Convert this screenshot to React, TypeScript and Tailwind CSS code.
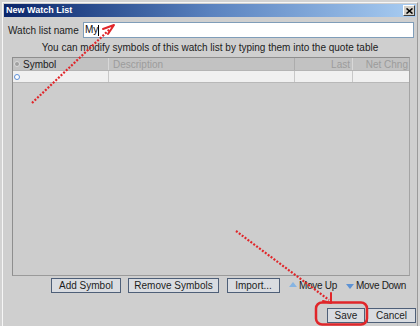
import React from 'react';

/**
 * NewWatchListDialog — classic Win2k-style "New Watch List" dialog with
 * red hand-drawn annotations (dotted arrows + circled Save button).
 */

const FONT = { fontFamily: '"Liberation Sans", Arial, sans-serif' };

function DialogButton({ label, className = '' }: { label: string; className?: string }) {
  return (
    <button
      type="button"
      className={`h-[15px] border border-[#4e5f78] bg-[#d9dce1] text-[10px] leading-[13px] text-[#1c1c1c] ${className}`}
    >
      {label}
    </button>
  );
}

function Annotations() {
  return (
    <svg className="absolute inset-0 pointer-events-none" width={420} height={326} viewBox="0 0 420 326">
      <g stroke="#e0262a" fill="none">
        {/* arrow to the name field */}
        <line x1={32} y1={103} x2={110} y2={29} strokeWidth={2.2} strokeDasharray="2 1.6" />
        <polyline points="103,29 114,25 108,34" strokeWidth={2} strokeLinejoin="round" strokeLinecap="round" />
        {/* arrow to Save */}
        <line x1={236} y1={231} x2={329} y2={300} strokeWidth={2.2} strokeDasharray="2 1.6" />
        <polyline points="331,293 331,303 323,301" strokeWidth={2} strokeLinejoin="round" strokeLinecap="round" />
        {/* circle around Save */}
        <rect x={316} y={302.5} width={51} height={22} rx={6} strokeWidth={2.5} />
      </g>
    </svg>
  );
}

export default function App() {
  return (
    <div className="relative w-[420px] h-[326px] overflow-hidden bg-[#d3d3d3] pt-[2px] pl-[2px] pr-[2px]" style={FONT}>
      <div className="h-[330px] border-l border-t border-[#f6f6f6] border-r border-r-[#9a9a9a] p-[1px] bg-[#cfcfcf]">
        {/* title bar */}
        <div className="flex items-center justify-between h-[13px] pl-[2px] pr-[1px] bg-gradient-to-r from-[#0a246a] via-[#5a82bf] to-[#a9cdf2]">
          <span className="text-[9px] font-bold text-white leading-none">New Watch List</span>
          <span className="flex items-center justify-center w-[12px] h-[11px] bg-[#d4d0c8] border border-t-white border-l-white border-r-[#404040] border-b-[#404040]">
            <svg width="7" height="6" viewBox="0 0 7 6">
              <path d="M0.5 0.5 L6.5 5.5 M6.5 0.5 L0.5 5.5" stroke="#000" strokeWidth={1.6} />
            </svg>
          </span>
        </div>

        {/* name row */}
        <div className="flex items-center mt-[5px] pl-[4px] pr-[2px]">
          <span className="w-[75px] text-[10px] text-[#1c1c1c]">Watch list name</span>
          <div className="flex items-center flex-1 h-[16px] border border-[#7f9db9] bg-white pl-[1px]">
            <span className="text-[10px] text-[#111] leading-none">My</span>
            <span className="w-[1px] h-[11px] bg-black" />
          </div>
        </div>

        {/* hint */}
        <p className="mt-[4px] text-center text-[10px] leading-[12px] text-[#1c1c1c]">
          You can modify symbols of this watch list by typing them into the quote table
        </p>

        {/* quote table */}
        <div className="mt-[3px] ml-[8px] w-[398px] h-[219px] border border-[#8e8e8e] border-r-[#a4a4a4] border-b-[#9a9a9a] bg-[#cdcdcd]">
          <div className="flex h-[13px] bg-[#c2c2c2] border-b border-[#b4b4b4] text-[10px] leading-[13px]">
            <div className="flex items-center justify-center w-[8px]">
              <span className="w-[6px] h-[6px] rounded-full bg-[#a0a0a0] border border-[#dcdcdc]" />
            </div>
            <div className="w-[88px] pl-[2px] text-[#1c1c1c] border-r border-[#d8d8d8]">Symbol</div>
            <div className="w-[186px] pl-[4px] text-[#9c9c9c] border-r border-[#acacac]">Description</div>
            <div className="w-[58px] pr-[2px] text-right text-[#9c9c9c] border-r border-[#d8d8d8]">Last</div>
            <div className="flex-1 pr-[1px] text-right text-[#9c9c9c]">Net Chng</div>
          </div>
          <div className="flex h-[12px] bg-[#f0f0f0] border-b border-[#b8b8b8]">
            <div className="flex items-center justify-center w-[8px]">
              <span className="w-[6px] h-[6px] rounded-full border border-[#5d8fd6] bg-white" />
            </div>
            <div className="w-[88px] border-r border-[#c8c8c8]" />
            <div className="w-[186px] border-r border-[#c8c8c8]" />
            <div className="w-[58px] border-r border-[#c8c8c8]" />
            <div className="flex-1" />
          </div>
        </div>

        {/* table actions */}
        <div className="flex items-center mt-[2px] pl-[47px] text-[10px] text-[#1c1c1c]">
          <DialogButton label="Add Symbol" className="w-[70px]" />
          <DialogButton label="Remove Symbols" className="w-[91px] ml-[7px]" />
          <DialogButton label="Import..." className="w-[53px] ml-[8px]" />
          <span className="flex items-center ml-[9px] tracking-[-0.3px]">
            <svg width="8" height="5" viewBox="0 0 8 5" className="mb-[3px]">
              <path d="M0 5 L4 0 L8 5 Z" fill="#86b4e2" />
            </svg>
            <span className="ml-[2px]">Move Up</span>
          </span>
          <span className="flex items-center ml-[9px] tracking-[-0.3px]">
            <svg width="8" height="5" viewBox="0 0 8 5" className="mt-[2px]">
              <path d="M0 0 L8 0 L4 5 Z" fill="#5d92d4" />
            </svg>
            <span className="ml-[2px]">Move Down</span>
          </span>
        </div>

        {/* dialog buttons */}
        <div className="flex justify-end gap-[2px] mt-[15px] pr-[0px]">
          <DialogButton label="Save" className="w-[38px]" />
          <DialogButton label="Cancel" className="w-[49px]" />
        </div>
      </div>
      <Annotations />
    </div>
  );
}
